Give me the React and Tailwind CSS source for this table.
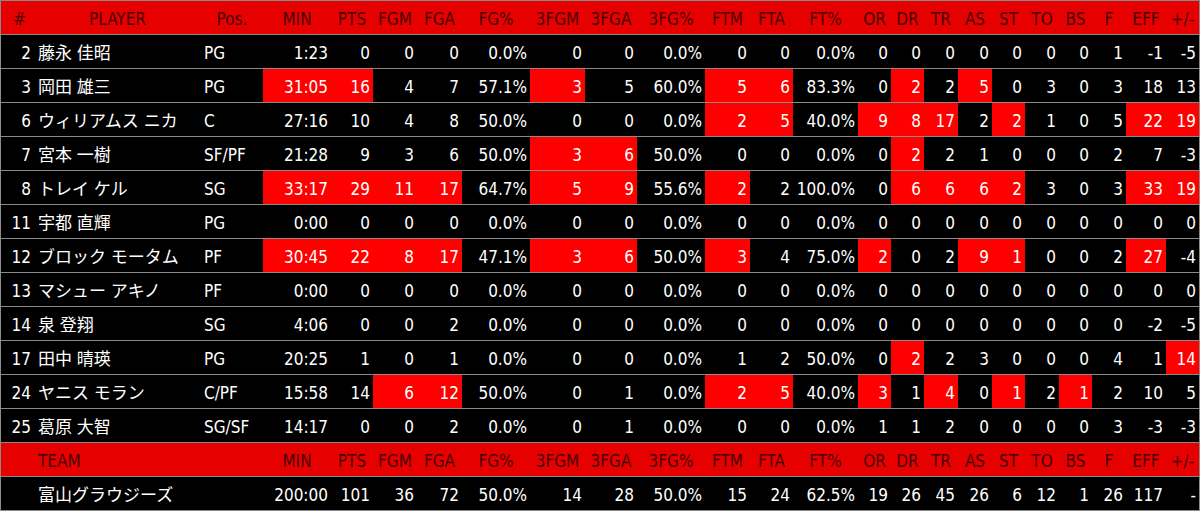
import React from 'react';

// column definitions: width classes written out so tailwind picks them up
const cols = [
  { key: 'no', w: 'w-[33px]' },
  { key: 'name', w: 'w-[167px]' },
  { key: 'pos', w: 'w-[62px]' },
  { key: 'MIN', w: 'w-[68px]' },
  { key: 'PTS', w: 'w-[42px]' },
  { key: 'FGM', w: 'w-[44px]' },
  { key: 'FGA', w: 'w-[45px]' },
  { key: 'FG%', w: 'w-[68px]' },
  { key: '3FGM', w: 'w-[55px]' },
  { key: '3FGA', w: 'w-[52px]' },
  { key: '3FG%', w: 'w-[68px]' },
  { key: 'FTM', w: 'w-[45px]' },
  { key: 'FTA', w: 'w-[43px]' },
  { key: 'FT%', w: 'w-[65px]' },
  { key: 'OR', w: 'w-[33px]' },
  { key: 'DR', w: 'w-[33px]' },
  { key: 'TR', w: 'w-[34px]' },
  { key: 'AS', w: 'w-[34px]' },
  { key: 'ST', w: 'w-[33px]' },
  { key: 'TO', w: 'w-[34px]' },
  { key: 'BS', w: 'w-[33px]' },
  { key: 'F', w: 'w-[34px]' },
  { key: 'EFF', w: 'w-[40px]' },
  { key: '+/-', w: 'w-[33px]' },
];

const statKeys = cols.slice(3).map((c) => c.key);

// "*" suffix = highlighted cell
const players = [
  ['2', '藤永 佳昭', 'PG', '1:23 0 0 0 0.0% 0 0 0.0% 0 0 0.0% 0 0 0 0 0 0 0 1 -1 -5'],
  ['3', '岡田 雄三', 'PG', '31:05* 16* 4 7 57.1% 3* 5 60.0% 5* 6* 83.3% 0 2* 2 5* 0 3 0 3 18 13'],
  ['6', 'ウィリアムス ニカ', 'C', '27:16 10 4 8 50.0% 0 0 0.0% 2* 5* 40.0% 9* 8* 17* 2 2* 1 0 5 22* 19*'],
  ['7', '宮本 一樹', 'SF/PF', '21:28 9 3 6 50.0% 3* 6* 50.0% 0 0 0.0% 0 2* 2 1 0 0 0 2 7 -3'],
  ['8', 'トレイ ケル', 'SG', '33:17* 29* 11* 17* 64.7% 5* 9* 55.6% 2* 2 100.0% 0 6* 6* 6* 2* 3 0 3 33* 19*'],
  ['11', '宇都 直輝', 'PG', '0:00 0 0 0 0.0% 0 0 0.0% 0 0 0.0% 0 0 0 0 0 0 0 0 0 0'],
  ['12', 'ブロック モータム', 'PF', '30:45* 22* 8* 17* 47.1% 3* 6* 50.0% 3* 4 75.0% 2* 0 2 9* 1* 0 0 2 27* -4'],
  ['13', 'マシュー アキノ', 'PF', '0:00 0 0 0 0.0% 0 0 0.0% 0 0 0.0% 0 0 0 0 0 0 0 0 0 0'],
  ['14', '泉 登翔', 'SG', '4:06 0 0 2 0.0% 0 0 0.0% 0 0 0.0% 0 0 0 0 0 0 0 0 -2 -5'],
  ['17', '田中 晴瑛', 'PG', '20:25 1 0 1 0.0% 0 0 0.0% 1 2 50.0% 0 2* 2 3 0 0 0 4 1 14*'],
  ['24', 'ヤニス モラン', 'C/PF', '15:58 14 6* 12* 50.0% 0 1 0.0% 2* 5* 40.0% 3* 1 4* 0 1* 2 1* 2 10 5'],
  ['25', '葛原 大智', 'SG/SF', '14:17 0 0 2 0.0% 0 1 0.0% 0 0 0.0% 1 1 2 0 0 0 0 3 -3 -3'],
];

const team = '200:00 101 36 72 50.0% 14 28 50.0% 15 24 62.5% 19 26 45 26 6 12 1 26 117 -';

const font = { fontFamily: '"Liberation Sans Narrow", "DejaVu Sans Condensed", "Noto Sans CJK JP", sans-serif' };

const HeaderRow = ({ label }) => (
  <div className="flex h-[34px] border-b border-[#8a8a8a] bg-[#e60000] pt-[2px] text-[#4a0000]">
    <div className={`${cols[0].w} pl-[12px] leading-[32px]`}>{label ? '' : '#'}</div>
    <div className={`${cols[1].w} leading-[32px] ${label ? 'pl-[4px] text-left' : 'text-center'}`}>
      {label || 'PLAYER'}
    </div>
    <div className={`${cols[2].w} text-center leading-[32px]`}>{label ? '' : 'Pos.'}</div>
    {statKeys.map((k, i) => (
      <div key={k} className={`${cols[i + 3].w} text-center leading-[32px] whitespace-nowrap`}>
        {k}
      </div>
    ))}
  </div>
);

const StatCells = ({ line }) =>
  line.split(' ').map((v, i) => {
    const hot = v.endsWith('*');
    return (
      <div
        key={i}
        className={`${cols[i + 3].w} pr-[3px] pt-[2px] text-right leading-[33px] whitespace-nowrap ${hot ? 'bg-[#ff0000]' : ''}`}
      >
        {hot ? v.slice(0, -1) : v}
      </div>
    );
  });

const PlayerRow = ({ no, name, pos, line }) => (
  <div className="flex h-[34px] border-b border-[#8a8a8a] text-white">
    <div className={`${cols[0].w} pr-[3px] pt-[2px] text-right leading-[33px]`}>{no}</div>
    <div className={`${cols[1].w} pl-[4px] pt-[2px] leading-[33px] whitespace-nowrap`}>{name}</div>
    <div className={`${cols[2].w} pl-[3px] pt-[2px] leading-[33px]`}>{pos}</div>
    <StatCells line={line} />
  </div>
);

const App = () => (
  <div className="w-[1200px] h-[511px] bg-black overflow-hidden">
    <div className="border-t border-x border-[#8a8a8a] text-[17px]" style={font}>
      <HeaderRow />
      {players.map(([no, name, pos, line]) => (
        <PlayerRow key={no} no={no} name={name} pos={pos} line={line} />
      ))}
      <HeaderRow label="TEAM" />
      <PlayerRow no="" name="富山グラウジーズ" pos="" line={team} />
    </div>
  </div>
);

export default App;
